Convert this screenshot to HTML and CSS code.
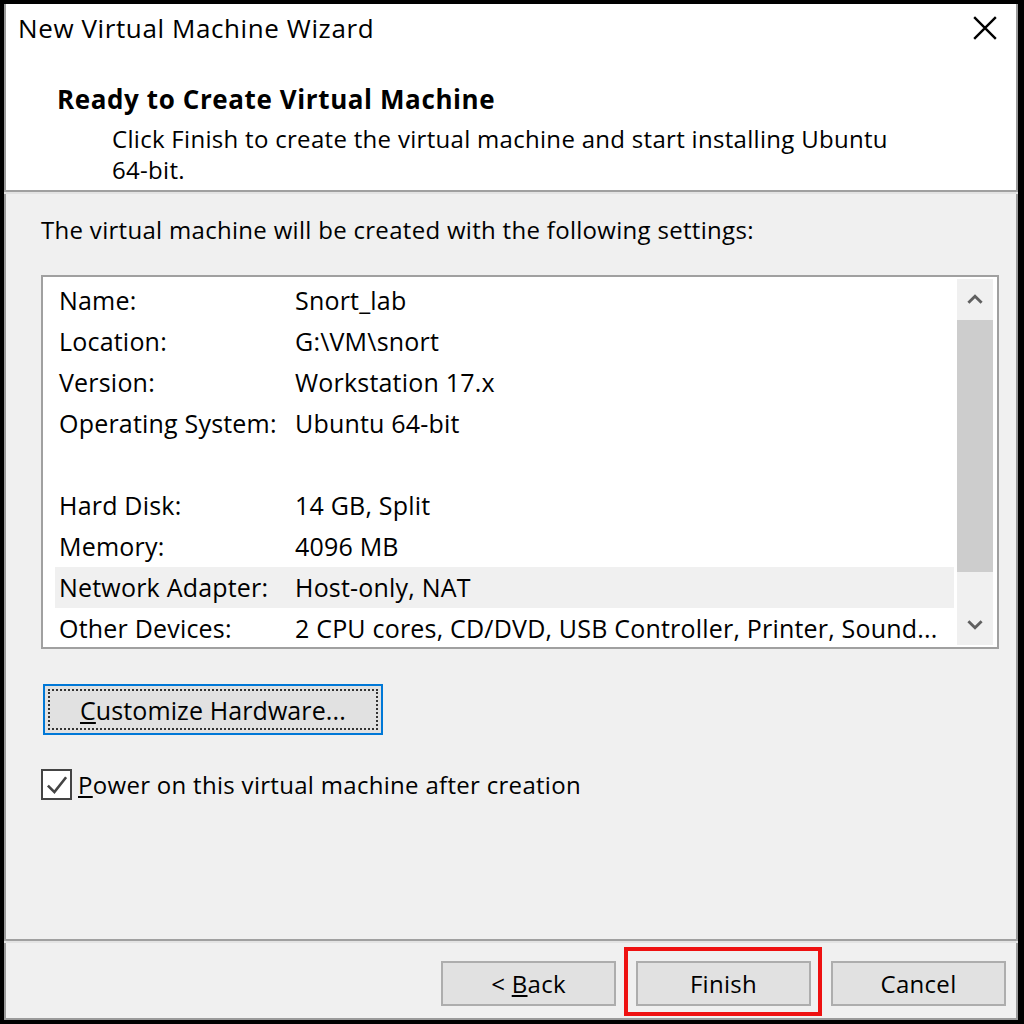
FILE: index.html
```html
<!DOCTYPE html>
<html>
<head>
<meta charset="utf-8">
<link rel="stylesheet" href="styles.css">
</head>
<body>
<div class="window">
  <div class="header">
    <div class="titlebar">
      <span class="title">New Virtual Machine Wizard</span>
      <svg class="close" viewBox="0 0 24 24" width="26" height="26"><path d="M2 2 L22 22 M22 2 L2 22" stroke="#000" stroke-width="2.2" fill="none"/></svg>
    </div>
    <div class="heading">Ready to Create Virtual Machine</div>
    <div class="subtitle">Click Finish to create the virtual machine and start installing Ubuntu<br>64-bit.</div>
  </div>
  <div class="sep"></div>
  <div class="content">
    <div class="intro">The virtual machine will be created with the following settings:</div>
    <div class="listbox">
      <div class="rows">
        <div class="row"><span class="lbl">Name:</span><span class="val">Snort_lab</span></div>
        <div class="row"><span class="lbl">Location:</span><span class="val">G:\VM\snort</span></div>
        <div class="row"><span class="lbl">Version:</span><span class="val">Workstation 17.x</span></div>
        <div class="row"><span class="lbl">Operating System:</span><span class="val">Ubuntu 64-bit</span></div>
        <div class="row"><span class="lbl"></span><span class="val"></span></div>
        <div class="row"><span class="lbl">Hard Disk:</span><span class="val">14 GB, Split</span></div>
        <div class="row"><span class="lbl">Memory:</span><span class="val">4096 MB</span></div>
        <div class="row sel"><span class="lbl">Network Adapter:</span><span class="val">Host-only, NAT</span></div>
        <div class="row"><span class="lbl">Other Devices:</span><span class="val">2 CPU cores, CD/DVD, USB Controller, Printer, Sound...</span></div>
      </div>
      <div class="scrollbar">
        <div class="arrow"><svg viewBox="0 0 16 10" width="18" height="11"><path d="M2 8 L8 2 L14 8" stroke="#606060" stroke-width="2.6" fill="none"/></svg></div>
        <div class="track"><div class="thumb"></div></div>
        <div class="arrow"><svg viewBox="0 0 16 10" width="18" height="11"><path d="M2 2 L8 8 L14 2" stroke="#606060" stroke-width="2.6" fill="none"/></svg></div>
      </div>
    </div>
    <div class="custom-wrap">
      <button class="btn focus"><span class="focusrect"><u>C</u>ustomize Hardware...</span></button>
    </div>
    <label class="check">
      <span class="box"><svg viewBox="0 0 20 20" width="26" height="26"><path d="M3 10.5 L8 15.5 L17 4" stroke="#444" stroke-width="2" fill="none"/></svg></span>
      <span><u>P</u>ower on this virtual machine after creation</span>
    </label>
  </div>
  <div class="sep2"></div>
  <div class="footer">
    <button class="btn fbtn">&lt; <u>B</u>ack</button>
    <div class="finish-wrap">
      <button class="btn fbtn">Finish</button>
      <div class="redbox"></div>
    </div>
    <button class="btn fbtn">Cancel</button>
  </div>
</div>
</body>
</html>
```

FILE: styles.css
```css
* { box-sizing: border-box; }
html, body { margin: 0; padding: 0; background: #000; }
body { font-family: "Open Sans", "Noto Sans", sans-serif; color: #000; }
.window {
  width: 1024px;
  height: 1024px;
  border-top: 4px solid #000;
  border-left: 4px solid #000;
  border-right: 6px solid #000;
  border-bottom: 4px solid #000;
  background: #f0f0f0;
  display: flex;
  flex-direction: column;
  overflow: hidden;
}
.header {
  background: #fff;
  height: 186px;
  border-left: 2px solid #9a9a9a;
  border-right: 2px solid #9a9a9a;
}
.titlebar {
  height: 48px;
  display: flex;
  align-items: center;
  justify-content: space-between;
  padding: 0 18px 0 12px;
}
.title { font-size: 26px; letter-spacing: 0.6px; }
.heading {
  margin-top: 32px;
  padding-left: 51px;
  font-weight: bold;
  font-size: 26px;
  letter-spacing: 0.6px;
  line-height: 31px;
}
.subtitle {
  margin-top: 8px;
  padding-left: 106px;
  font-size: 24px;
  letter-spacing: 0.3px;
  line-height: 31px;
}
.sep {
  height: 4px;
  border-top: 2px solid #a0a0a0;
  border-bottom: 2px solid #e3e3e3;
  background: #c8c8c8;
}
.content {
  flex: 1;
  padding: 20px 15px 0 35px;
  font-size: 24px;
  letter-spacing: 0.3px;
  border-left: 2px solid #9a9a9a;
  border-right: 2px solid #9a9a9a;
}
.intro { line-height: 31px; }
.listbox {
  margin-top: 30px;
  width: 958px;
  height: 374px;
  border: 2px solid #a0a0a0;
  background: #fff;
  display: flex;
  padding: 3px 4px 2px 12px;
  font-size: 25px;
  letter-spacing: 0.2px;
}
.rows { flex: 1; }
.row {
  height: 41px;
  line-height: 41px;
  display: flex;
  padding-left: 4px;
  white-space: nowrap;
}
.row.sel { background: #f0f0f0; }
.lbl { width: 236px; flex: none; }
.scrollbar {
  width: 36px;
  background: #f0f0f0;
  display: flex;
  flex-direction: column;
  margin-left: 3px;
  margin-top: -1px;
}
.arrow { height: 41px; display: flex; align-items: center; justify-content: center; }
.track { flex: 1; display: flex; flex-direction: column; }
.thumb { height: 252px; background: #cdcdcd; }
.btn {
  font-family: inherit;
  font-size: 24px;
  letter-spacing: 0.3px;
  color: #000;
  background: #e1e1e1;
  border: 2px solid #adadad;
  padding: 0;
}
.custom-wrap { margin-top: 35px; padding-left: 2px; }
.btn.focus {
  width: 340px;
  height: 51px;
  border: 2px solid #0078d7;
  padding: 3px;
  display: flex;
  font-size: 25px;
  letter-spacing: 0.1px;
}
.focusrect {
  flex: 1;
  border: 2px dotted #333;
  display: flex;
  align-items: center;
  padding-left: 30px;
}
.check {
  margin-top: 33px;
  display: flex;
  align-items: center;
  gap: 6px;
}
.box {
  width: 31px;
  height: 31px;
  border: 2px solid #444;
  background: #fff;
  display: flex;
  align-items: center;
  justify-content: center;
}
.sep2 {
  height: 4px;
  border-top: 2px solid #a0a0a0;
  border-bottom: 2px solid #e3e3e3;
  background: #c8c8c8;
}
.footer {
  height: 77px;
  display: flex;
  align-items: flex-start;
  padding: 18px 0 0 435px;
  gap: 20px;
  border-left: 2px solid #9a9a9a;
  border-right: 2px solid #9a9a9a;
  border-bottom: 2px solid #9a9a9a;
}
.fbtn { width: 175px; height: 45px; }
.finish-wrap { position: relative; }
.redbox {
  position: absolute;
  left: -12px;
  top: -14px;
  width: 198px;
  height: 69px;
  border: 4px solid #ee1111;
  pointer-events: none;
}
```
